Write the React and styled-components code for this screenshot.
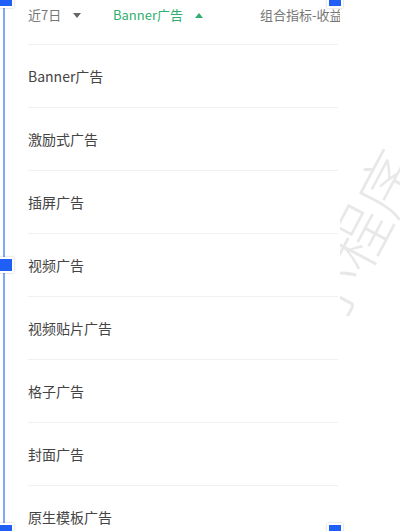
import styled, { createGlobalStyle } from "styled-components";

const GlobalStyle = createGlobalStyle`
  html, body {
    margin: 0;
    padding: 0;
    background: #fff;
  }
  body {
    font-family: "Noto Sans CJK SC", "Noto Sans", sans-serif;
  }
`;

const Screen = styled.div`
  position: relative;
  width: 400px;
  height: 531px;
  overflow: hidden;
  background: #fff;
`;

const Page = styled.div`
  position: relative;
  z-index: 1;
  width: 340px;
  height: 531px;
  overflow: hidden;
  padding-left: 28px;
  box-sizing: border-box;
  background: #fff;
`;

const FilterBar = styled.div`
  display: grid;
  grid-template-columns: 85px 147px auto;
  align-items: start;
  height: 45px;
  padding-top: 6px;
  box-sizing: border-box;
  border-bottom: 1px solid #f1f1f1;
  white-space: nowrap;
  width: 310px;
`;

const Filter = styled.div`
  display: flex;
  align-items: center;
  gap: 12px;
  font-size: 13px;
  line-height: 18px;
  color: ${(p) => (p.$active ? "#2fae6f" : "#777")};
`;

const Caret = styled.span`
  width: 0;
  height: 0;
  border-left: 4px solid transparent;
  border-right: 4px solid transparent;
  ${(p) =>
    p.$up
      ? `border-bottom: 5px solid ${p.$color};`
      : `border-top: 5px solid ${p.$color};`}
`;

const List = styled.ul`
  list-style: none;
  margin: 0;
  padding: 0;
  width: 310px;
`;

const Item = styled.li`
  height: 62px;
  display: flex;
  align-items: center;
  font-size: 14px;
  color: #444;
  border-bottom: 1px solid #f1f1f1;
`;

const FrameLine = styled.div`
  position: absolute;
  z-index: 2;
  left: 3px;
  top: 0;
  bottom: 0;
  width: 2px;
  background: #7fa8ff;
`;

const Handle = styled.div`
  position: absolute;
  z-index: 3;
  width: 12px;
  height: 12px;
  background: #1f5ff5;
  border: 2px solid #fff;
  box-shadow: 0 0 2px rgba(0, 0, 0, 0.25);
  left: ${(p) => p.$x}px;
  top: ${(p) => p.$y}px;
`;

const Watermark = styled.div`
  position: absolute;
  z-index: 0;
  left: 356px;
  top: 236px;
  font-size: 62px;
  font-weight: 300;
  color: rgba(0, 0, 0, 0.09);
  transform: translate(-50%, -50%) rotate(-62deg);
  white-space: nowrap;
  pointer-events: none;
`;

const filters = [
  { label: "近7日" },
  { label: "Banner广告", active: true, up: true },
  { label: "组合指标-收益", caret: false },
];

const adTypes = [
  "Banner广告",
  "激励式广告",
  "插屏广告",
  "视频广告",
  "视频贴片广告",
  "格子广告",
  "封面广告",
  "原生模板广告",
];

export default function App() {
  return (
    <>
      <GlobalStyle />
      <Screen>
        <Page>
          <FilterBar>
            {filters.map((f) => (
              <Filter key={f.label} $active={f.active}>
                {f.label}
                {f.caret !== false && (
                  <Caret $up={f.up} $color={f.active ? "#2fae6f" : "#666"} />
                )}
              </Filter>
            ))}
          </FilterBar>
          <List>
            {adTypes.map((t) => (
              <Item key={t}>{t}</Item>
            ))}
          </List>
        </Page>
        <Watermark>小程序</Watermark>
        <FrameLine />
        <Handle $x={-2} $y={-8} />
        <Handle $x={-2} $y={257} />
        <Handle $x={-2} $y={523} />
        <Handle $x={327} $y={-8} />
        <Handle $x={327} $y={523} />
      </Screen>
    </>
  );
}
